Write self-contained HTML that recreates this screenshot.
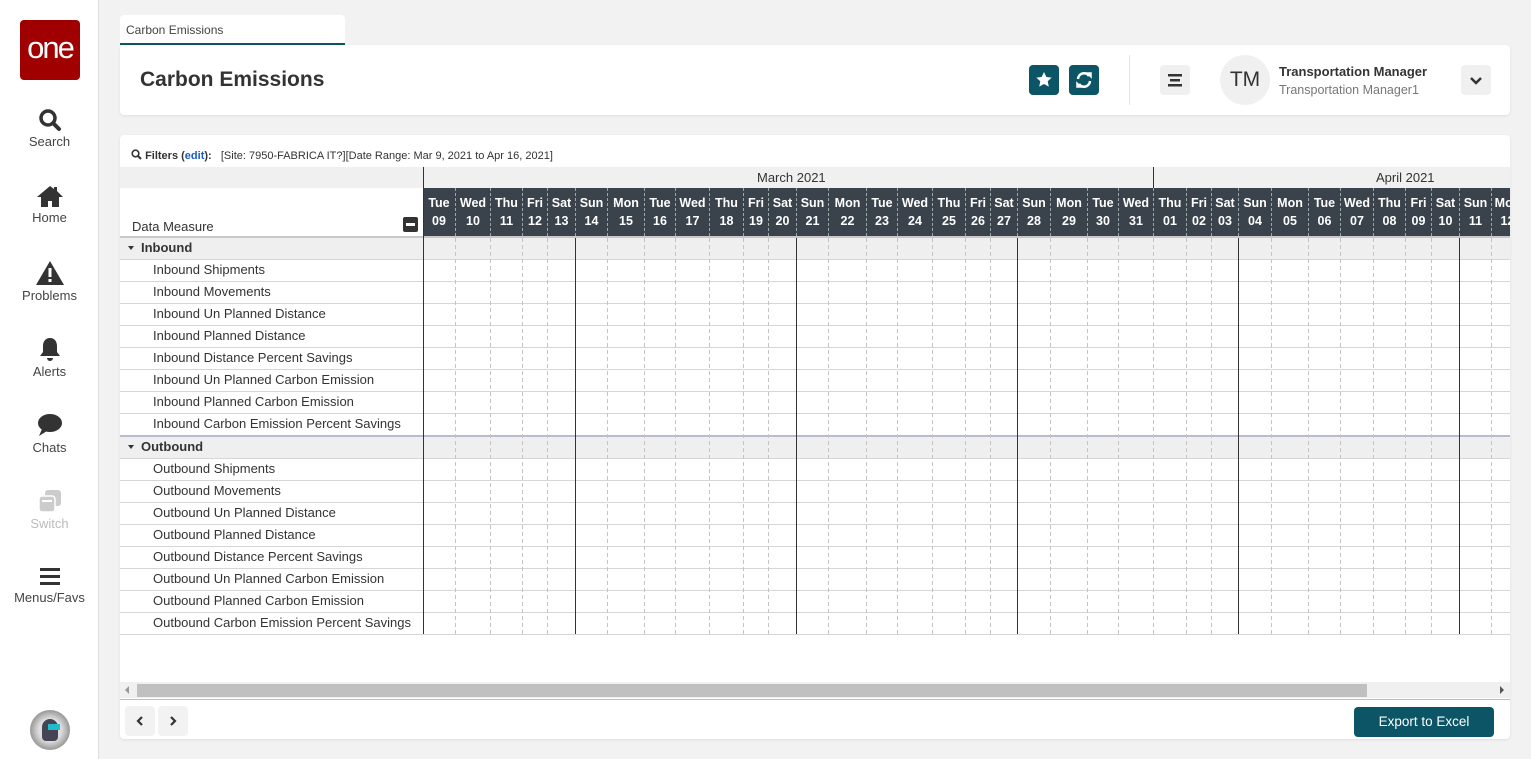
<!DOCTYPE html>
<html><head><meta charset="utf-8"><style>
*{box-sizing:border-box;margin:0;padding:0}
body{width:1531px;height:759px;background:#f2f2f2;font-family:"Liberation Sans",sans-serif;color:#333;position:relative;overflow:hidden}
.a{position:absolute}
.side{left:0;top:0;width:99px;height:759px;background:#fff;border-right:1px solid #ddd}
.nav{left:0;width:99px;text-align:center;font-size:13px;color:#444}
.nav svg{display:block;margin:0 auto 2px}
.card{background:#fff;border-radius:4px;box-shadow:0 1px 3px rgba(0,0,0,.08)}
.btn{border-radius:4px}
.hd{display:flex;left:423px;top:188px;width:1087px;height:48px;background:#3a434c;overflow:hidden}
.hd div{flex:none;color:#fff;font-weight:bold;font-size:12.5px;text-align:center;line-height:18px;padding-top:6px;border-left:1px dashed #9aa;}
.lab{left:120px;width:303px;height:22px;font-size:13px;line-height:22px;padding-left:33px;color:#333}
.grp{font-weight:bold;padding-left:21px}
</style></head><body>
<div class="a side"></div>
<div class="a" style="left:20px;top:20px;width:60px;height:60px;background:#a00000;border-radius:4px;color:#fff;font-size:31px;text-align:center;line-height:56px;letter-spacing:-2px">one</div>
<div class="a nav" style="top:108px"><svg width="24" height="24" viewBox="0 0 24 24"><circle cx="10" cy="10" r="7" fill="none" stroke="#333" stroke-width="3.5"/><path d="M15 15l6 6" stroke="#333" stroke-width="4" stroke-linecap="round"/></svg>Search</div>
<div class="a nav" style="top:184px"><svg width="30" height="24" viewBox="0 0 30 24"><path d="M15 2L2 13h4v10h7v-6h4v6h7V13h4L22 7V3h-3v2z" fill="#333"/></svg>Home</div>
<div class="a nav" style="top:260px"><svg width="30" height="26" viewBox="0 0 30 26"><path d="M15 1L1 25h28z" fill="#333"/><rect x="13.5" y="8" width="3" height="9" fill="#fff"/><rect x="13.5" y="19" width="3" height="3" fill="#fff"/></svg>Problems</div>
<div class="a nav" style="top:336px"><svg width="24" height="26" viewBox="0 0 24 26"><path d="M12 2c-5 0-7 4-7 8v6l-3 4h20l-3-4v-6c0-4-2-8-7-8z" fill="#333"/><path d="M9 22a3 3 0 0 0 6 0z" fill="#333"/></svg>Alerts</div>
<div class="a nav" style="top:412px"><svg width="28" height="26" viewBox="0 0 28 26"><ellipse cx="14" cy="11" rx="12" ry="9" fill="#333"/><path d="M6 17l-3 7 8-5z" fill="#333"/></svg>Chats</div>
<div class="a nav" style="top:488px;color:#bbb"><svg width="26" height="26" viewBox="0 0 26 26"><rect x="8" y="2" width="16" height="16" rx="3" fill="#ccc"/><rect x="2" y="8" width="16" height="16" rx="3" fill="#ccc" stroke="#fff" stroke-width="1.5"/><rect x="5" y="12" width="10" height="2" fill="#fff"/></svg>Switch</div>
<div class="a nav" style="top:566px"><svg width="24" height="22" viewBox="0 0 24 22"><rect x="2" y="2" width="20" height="3" fill="#333"/><rect x="2" y="9" width="20" height="3" fill="#333"/><rect x="2" y="16" width="20" height="3" fill="#333"/></svg>Menus/Favs</div>
<div class="a" style="left:30px;top:710px;width:40px;height:40px;border-radius:50%;background:radial-gradient(circle,#ddd 40%,#999 70%,#333 75%)"><div class="a" style="left:12px;top:9px;width:16px;height:22px;border-radius:8px 8px 4px 4px;background:#445"></div><div class="a" style="left:18px;top:14px;width:12px;height:6px;background:#2bc"></div></div>

<div class="a card" style="left:120px;top:15px;width:225px;height:30px;border-radius:4px 4px 0 0;border-bottom:2px solid #0b5566;font-size:12px;line-height:30px;padding-left:6px;color:#444;box-shadow:none">Carbon Emissions</div>
<div class="a card" style="left:120px;top:45px;width:1390px;height:70px"></div>
<div class="a" style="left:140px;top:68px;font-size:21px;font-weight:bold;color:#333">Carbon Emissions</div>
<div class="a btn" style="left:1029px;top:65px;width:30px;height:30px;background:#0b5566"><svg width="30" height="30" viewBox="0 0 30 30"><path d="M15 7l2.4 5 5.3.6-4 3.7 1.1 5.3L15 19l-4.8 2.6 1.1-5.3-4-3.7 5.3-.6z" fill="#fff"/></svg></div>
<div class="a btn" style="left:1069px;top:65px;width:30px;height:30px;background:#0b5566"><svg width="30" height="30" viewBox="0 0 30 30"><path d="M9 14a6 6 0 0 1 11-3M21 16a6 6 0 0 1-11 3" fill="none" stroke="#fff" stroke-width="2.5"/><path d="M18 8h4v4zM12 22H8v-4z" fill="#fff" stroke="#fff" stroke-width="1.5"/></svg></div>
<div class="a" style="left:1129px;top:55px;width:1px;height:50px;background:#e5e5e5"></div>
<div class="a btn" style="left:1160px;top:65px;width:30px;height:30px;background:#f0f0f0"><svg width="30" height="30" viewBox="0 0 30 30"><rect x="8" y="9" width="14" height="2.5" fill="#333"/><rect x="10" y="14" width="10" height="2.5" fill="#333"/><rect x="8" y="19" width="14" height="2.5" fill="#333"/></svg></div>
<div class="a" style="left:1220px;top:55px;width:50px;height:50px;border-radius:50%;background:#f0f0f0;font-size:21px;text-align:center;line-height:50px;color:#333">TM</div>
<div class="a" style="left:1279px;top:64px;font-size:13px;font-weight:bold;color:#333">Transportation Manager</div>
<div class="a" style="left:1279px;top:83px;font-size:12.5px;color:#777">Transportation Manager1</div>
<div class="a btn" style="left:1461px;top:65px;width:30px;height:30px;background:#f0f0f0"><svg width="30" height="30" viewBox="0 0 30 30"><path d="M10 13l5 5 5-5" fill="none" stroke="#333" stroke-width="2.5"/></svg></div>

<div class="a card" style="left:120px;top:135px;width:1390px;height:604px"></div>
<div class="a" style="left:131px;top:149px;font-size:11px;color:#333"><svg width="11" height="11" viewBox="0 0 11 11" style="vertical-align:-1px"><circle cx="4.5" cy="4.5" r="3.3" fill="none" stroke="#333" stroke-width="1.6"/><path d="M7 7l3 3" stroke="#333" stroke-width="2"/></svg> <b>Filters (<span style="color:#1a5bc4">edit</span>):</b>&nbsp;&nbsp; [Site: 7950-FABRICA IT?][Date Range: Mar 9, 2021 to Apr 16, 2021]</div>

<div class="a" style="left:120px;top:167px;width:1390px;height:21px;background:#f0f0f0"></div>
<div class="a" style="left:423px;top:167px;width:1px;height:21px;background:#333"></div>
<div class="a" style="left:1153px;top:167px;width:1px;height:21px;background:#333"></div>
<div class="a" style="left:757px;top:170px;font-size:13px;color:#333">March 2021</div>
<div class="a" style="left:1376px;top:170px;font-size:13px;color:#333">April 2021</div>
<div class="a" style="left:120px;top:188px;width:303px;height:48px;background:#fff"></div>
<div class="a" style="left:132px;top:219px;font-size:13px;color:#333">Data Measure</div>
<div class="a" style="left:403px;top:217px;width:15px;height:15px;background:#333;border-radius:2px"><div class="a" style="left:3px;top:6px;width:9px;height:3px;background:#fff"></div></div>
<div class="a hd">
<div style="width:32px;border-left:none">Tue<br>09</div><div style="width:35px">Wed<br>10</div><div style="width:32px">Thu<br>11</div><div style="width:25px">Fri<br>12</div><div style="width:28px">Sat<br>13</div><div style="width:32px">Sun<br>14</div><div style="width:37px">Mon<br>15</div><div style="width:31px">Tue<br>16</div><div style="width:34px">Wed<br>17</div><div style="width:34px">Thu<br>18</div><div style="width:25px">Fri<br>19</div><div style="width:28px">Sat<br>20</div><div style="width:32px">Sun<br>21</div><div style="width:38px">Mon<br>22</div><div style="width:31px">Tue<br>23</div><div style="width:35px">Wed<br>24</div><div style="width:33px">Thu<br>25</div><div style="width:25px">Fri<br>26</div><div style="width:27px">Sat<br>27</div><div style="width:33px">Sun<br>28</div><div style="width:37px">Mon<br>29</div><div style="width:31px">Tue<br>30</div><div style="width:35px">Wed<br>31</div><div style="width:33px">Thu<br>01</div><div style="width:25px">Fri<br>02</div><div style="width:27px">Sat<br>03</div><div style="width:33px">Sun<br>04</div><div style="width:37px">Mon<br>05</div><div style="width:32px">Tue<br>06</div><div style="width:33px">Wed<br>07</div><div style="width:32px">Thu<br>08</div><div style="width:26px">Fri<br>09</div><div style="width:28px">Sat<br>10</div><div style="width:32px">Sun<br>11</div><div style="width:32px">Mon<br>12</div>
</div>
<div class="a" style="left:120px;top:236px;width:1390px;height:2px;background:#c8c8c8"></div>

<div class="a" style="left:120px;top:238px;width:1390px;height:21px;background:#efefef"></div>
<div class="a" style="left:120px;top:437px;width:1390px;height:21px;background:#efefef"></div>
<svg class="a" style="left:0;top:0" width="1531" height="759">
<g stroke="#d6d6d6" stroke-width="1">
<path d="M120 259.5H1510M120 281.5H1510M120 303.5H1510M120 325.5H1510M120 347.5H1510M120 369.5H1510M120 391.5H1510M120 413.5H1510M120 458.5H1510M120 480.5H1510M120 502.5H1510M120 524.5H1510M120 546.5H1510M120 568.5H1510M120 590.5H1510M120 612.5H1510M120 634.5H1510"/>
</g>
<path d="M120 436H1510" stroke="#b9bccf" stroke-width="2"/>
<g stroke="#c4c4c4" stroke-dasharray="4 3">
<path d="M455.5 238V634M490.5 238V634M522.5 238V634M547.5 238V634M607.5 238V634M644.5 238V634M675.5 238V634M709.5 238V634M743.5 238V634M768.5 238V634M828.5 238V634M866.5 238V634M897.5 238V634M932.5 238V634M965.5 238V634M990.5 238V634M1050.5 238V634M1087.5 238V634M1118.5 238V634M1153.5 238V634M1186.5 238V634M1211.5 238V634M1271.5 238V634M1308.5 238V634M1340.5 238V634M1373.5 238V634M1405.5 238V634M1431.5 238V634M1491.5 238V634"/>
</g>
<g stroke="#333"><path d="M423.5 188V634M575.5 238V634M796.5 238V634M1017.5 238V634M1238.5 238V634M1459.5 238V634"/></g>
<path d="M128 246h6l-3 4z" fill="#333"/><path d="M128 445h6l-3 4z" fill="#333"/>
</svg>
<div class="a lab grp" style="top:237px">Inbound</div>
<div class="a lab" style="top:259px">Inbound Shipments</div>
<div class="a lab" style="top:281px">Inbound Movements</div>
<div class="a lab" style="top:303px">Inbound Un Planned Distance</div>
<div class="a lab" style="top:325px">Inbound Planned Distance</div>
<div class="a lab" style="top:347px">Inbound Distance Percent Savings</div>
<div class="a lab" style="top:369px">Inbound Un Planned Carbon Emission</div>
<div class="a lab" style="top:391px">Inbound Planned Carbon Emission</div>
<div class="a lab" style="top:413px">Inbound Carbon Emission Percent Savings</div>
<div class="a lab grp" style="top:436px">Outbound</div>
<div class="a lab" style="top:458px">Outbound Shipments</div>
<div class="a lab" style="top:480px">Outbound Movements</div>
<div class="a lab" style="top:502px">Outbound Un Planned Distance</div>
<div class="a lab" style="top:524px">Outbound Planned Distance</div>
<div class="a lab" style="top:546px">Outbound Distance Percent Savings</div>
<div class="a lab" style="top:568px">Outbound Un Planned Carbon Emission</div>
<div class="a lab" style="top:590px">Outbound Planned Carbon Emission</div>
<div class="a lab" style="top:612px">Outbound Carbon Emission Percent Savings</div>

<div class="a" style="left:120px;top:682px;width:1390px;height:16px;background:#f0f0f0"></div>
<div class="a" style="left:137px;top:684px;width:1230px;height:13px;background:#c0c0c0"></div>
<div class="a" style="left:125px;top:686px;width:0;height:0;border:4px solid transparent;border-right-color:#999;border-left:0"></div>
<div class="a" style="left:1500px;top:686px;width:0;height:0;border:4px solid transparent;border-left-color:#555;border-right:0"></div>
<div class="a" style="left:120px;top:699px;width:1390px;height:1px;background:#b9bccf"></div>
<div class="a btn" style="left:125px;top:706px;width:30px;height:30px;background:#f2f2f2"><svg width="30" height="30" viewBox="0 0 30 30"><path d="M17 11l-4 4 4 4" fill="none" stroke="#333" stroke-width="2.2"/></svg></div>
<div class="a btn" style="left:158px;top:706px;width:30px;height:30px;background:#f2f2f2"><svg width="30" height="30" viewBox="0 0 30 30"><path d="M13 11l4 4-4 4" fill="none" stroke="#333" stroke-width="2.2"/></svg></div>
<div class="a btn" style="left:1354px;top:707px;width:140px;height:30px;background:#0b5566;color:#fff;font-size:13.5px;text-align:center;line-height:30px">Export to Excel</div>
</body></html>
